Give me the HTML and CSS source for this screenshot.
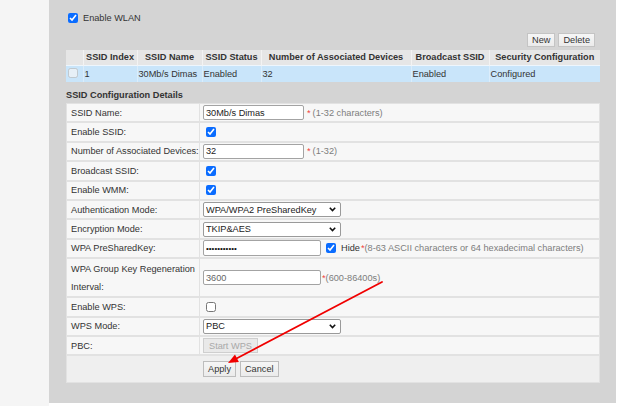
FILE: index.html
```html
<!DOCTYPE html>
<html>
<head>
<meta charset="utf-8">
<link rel="stylesheet" href="styles.css">
</head>
<body>
<div class="page">
  <aside class="side"></aside>
  <main class="panel">
    <label class="wlan"><input type="checkbox" class="cb" checked><span>Enable WLAN</span></label>
    <div class="toolbar">
      <button class="btn">New</button>
      <button class="btn">Delete</button>
    </div>
    <table class="list">
      <colgroup>
        <col class="c0"><col class="c1"><col class="c2"><col class="c3"><col class="c4"><col class="c5"><col class="c6">
      </colgroup>
      <thead>
        <tr><th></th><th>SSID Index</th><th>SSID Name</th><th>SSID Status</th><th>Number of Associated Devices</th><th>Broadcast SSID</th><th>Security Configuration</th></tr>
      </thead>
      <tbody>
        <tr><td class="cbcell"><input type="checkbox" class="cb" disabled></td><td>1</td><td>30Mb/s Dimas</td><td>Enabled</td><td>32</td><td>Enabled</td><td>Configured</td></tr>
      </tbody>
    </table>
    <h3 class="section">SSID Configuration Details</h3>
    <div class="cfg">
      <div class="row"><div class="lab">SSID Name:</div><div class="val"><input class="txt" type="text" value="30Mb/s Dimas"><span class="req">*</span><span class="hint">(1-32 characters)</span></div></div>
      <div class="row"><div class="lab">Enable SSID:</div><div class="val"><input type="checkbox" class="cb cbv" checked></div></div>
      <div class="row"><div class="lab">Number of Associated Devices:</div><div class="val"><input class="txt" type="text" value="32"><span class="req">*</span><span class="hint">(1-32)</span></div></div>
      <div class="row"><div class="lab">Broadcast SSID:</div><div class="val"><input type="checkbox" class="cb cbv" checked></div></div>
      <div class="row"><div class="lab">Enable WMM:</div><div class="val"><input type="checkbox" class="cb cbv" checked></div></div>
      <div class="row"><div class="lab">Authentication Mode:</div><div class="val"><span class="sel"><select><option>WPA/WPA2 PreSharedKey</option></select><svg class="chev" width="7" height="5" viewBox="0 0 7 5"><path d="M0.8 0.8 L3.5 3.5 L6.2 0.8" fill="none" stroke="#111" stroke-width="1.6"/></svg></span></div></div>
      <div class="row"><div class="lab">Encryption Mode:</div><div class="val"><span class="sel"><select><option>TKIP&amp;AES</option></select><svg class="chev" width="7" height="5" viewBox="0 0 7 5"><path d="M0.8 0.8 L3.5 3.5 L6.2 0.8" fill="none" stroke="#111" stroke-width="1.6"/></svg></span></div></div>
      <div class="row"><div class="lab">WPA PreSharedKey:</div><div class="val"><input class="txt short pw" type="password" value="12345678901"><input type="checkbox" class="cb hidecb" checked><span class="hide">Hide</span><span class="req r0">*</span><span class="hint h0">(8-63 ASCII characters or 64 hexadecimal characters)</span></div></div>
      <div class="row tall"><div class="lab two">WPA Group Key Regeneration Interval:</div><div class="val"><input class="txt short grey" type="text" value="3600"><span class="req r0">*</span><span class="hint h0">(600-86400s)</span></div></div>
      <div class="row"><div class="lab">Enable WPS:</div><div class="val"><input type="checkbox" class="cb cbv"></div></div>
      <div class="row"><div class="lab">WPS Mode:</div><div class="val"><span class="sel"><select><option>PBC</option></select><svg class="chev" width="7" height="5" viewBox="0 0 7 5"><path d="M0.8 0.8 L3.5 3.5 L6.2 0.8" fill="none" stroke="#111" stroke-width="1.6"/></svg></span></div></div>
      <div class="row"><div class="lab">PBC:</div><div class="val"><button class="btn dis" disabled>Start WPS</button></div></div>
      <div class="row actions"><button class="btn big">Apply</button><button class="btn big">Cancel</button></div>
    </div>
  </main>
  <div class="rest"></div>
</div>
<svg class="arrow" width="640" height="406" viewBox="0 0 640 406">
  <line x1="382" y1="282" x2="236.5" y2="358.5" stroke="#f00000" stroke-width="1.8" stroke-linecap="round"/>
  <polygon points="228,363 238.9,362 235,354.6" fill="#f00000"/>
</svg>
</body>
</html>
```

FILE: styles.css
```css
* { box-sizing: border-box; }

body {
  margin: 0;
  font-family: "Liberation Sans", Arial, sans-serif;
  font-size: 9.2px;
  color: #333;
  background: #fff;
}

.page {
  display: flex;
  height: 406px;
}

.side {
  width: 49px;
  background: #f5f5f5;
}

.panel {
  width: 567px;
  height: 403px;
  background: #d4d4d4;
  padding: 11px 16px 0 17px;
}

.rest {
  flex: 1;
  background: #fff;
}

.cb {
  width: 10px;
  height: 10px;
  margin: 0;
  accent-color: #0a6cff;
}

.wlan {
  display: flex;
  align-items: center;
  gap: 5px;
  height: 12px;
  padding-left: 2px;
  margin-top: 1px;
}

.toolbar {
  display: flex;
  justify-content: flex-end;
  gap: 3px;
  margin-top: 9px;
  padding-right: 5px;
}

.btn {
  font-family: "Liberation Sans", Arial, sans-serif;
  font-size: 9.2px;
  height: 14px;
  padding: 0 4px;
  margin: 0;
  color: #333;
  background: linear-gradient(#f6f6f6, #ebebeb);
  border: 1px solid #c4c4c4;
  border-radius: 0;
  line-height: 12px;
}

.btn.dis {
  height: 15px;
  color: #a8a8a8;
  background: #e9e9e9;
  border-color: #cfcfcf;
  padding: 0 5px;
}

.btn.big {
  height: 16px;
  padding: 0 4px;
  border-color: #bdbdbd;
}

.list {
  width: 534px;
  margin-top: 3px;
  border-collapse: collapse;
  table-layout: fixed;
}

.c0 { width: 17px; }
.c1 { width: 54px; }
.c2 { width: 65px; }
.c3 { width: 59px; }
.c4 { width: 150px; }
.c5 { width: 78px; }
.c6 { width: 111px; }

.list th {
  height: 15px;
  padding: 0;
  background: #e6e6e6;
  font-weight: bold;
  text-align: center;
  border-left: 1px solid #f3f3f3;
  white-space: nowrap;
}

.list th:first-child,
.list td:first-child {
  border-left: none;
}

.list td {
  height: 17px;
  padding: 0 0 0 1px;
  background: #c9e5fa;
  border-top: 1px solid #eef6fd;
  border-left: 1px solid #dcedfb;
  white-space: nowrap;
}

.list td.cbcell {
  padding-left: 2px;
}

.section {
  margin: 0;
  padding: 6px 0 1px;
  font-size: 9.2px;
  line-height: 14px;
  font-weight: bold;
  color: #333;
}

.cfg {
  width: 534px;
  border-left: 1px solid #e2e2e2;
  border-right: 1px solid #e2e2e2;
  border-top: 1px solid #e2e2e2;
}

.row {
  display: flex;
  height: 19.4px;
  background: #f7f7f7;
  border-bottom: 2px solid #e2e2e2;
}

.row.tall {
  height: 39px;
}

.lab {
  width: 133px;
  flex: none;
  display: flex;
  align-items: center;
  padding-left: 4px;
  border-right: 1px solid #e2e2e2;
  white-space: nowrap;
}

.lab.two {
  white-space: normal;
  line-height: 18px;
}

.val {
  flex: 1;
  display: flex;
  align-items: center;
  padding-left: 3px;
}

.txt {
  width: 101px;
  height: 15px;
  margin: 0;
  padding: 0 2px;
  font-family: "Liberation Sans", Arial, sans-serif;
  font-size: 9.2px;
  color: #222;
  background: #fff;
  border: 1px solid #a3a3a3;
  border-radius: 2px;
  outline: none;
}

.txt.short {
  width: 118px;
}

.txt.pw {
  height: 16px;
  font-size: 8px;
  letter-spacing: 0;
  color: #111;
}

.txt.grey {
  color: #666;
}

.req {
  color: #f0403c;
  margin-left: 3px;
  margin-right: 2px;
}

.req.r0 {
  margin-left: 1px;
  margin-right: 0;
}

.hint {
  color: #7d7d7d;
}

.cbv {
  margin-left: 3px;
}

.hidecb {
  margin-left: 5px;
}

.hide {
  margin-left: 5px;
  color: #333;
}

.sel {
  position: relative;
  display: inline-flex;
}

.sel select {
  appearance: none;
  -webkit-appearance: none;
  width: 138px;
  height: 15px;
  margin: 0;
  padding: 0 2px;
  font-family: "Liberation Sans", Arial, sans-serif;
  font-size: 9.2px;
  color: #222;
  background: #fff;
  border: 1px solid #9a9a9a;
  border-radius: 2px;
  outline: none;
}

.chev {
  position: absolute;
  right: 5px;
  top: 5px;
  pointer-events: none;
}

.row.actions {
  height: 27px;
  background: #efefef;
  border-bottom: 1px solid #e2e2e2;
  padding-left: 136px;
  align-items: center;
  gap: 4px;
}

.arrow {
  position: absolute;
  left: 0;
  top: 0;
  pointer-events: none;
}
```
